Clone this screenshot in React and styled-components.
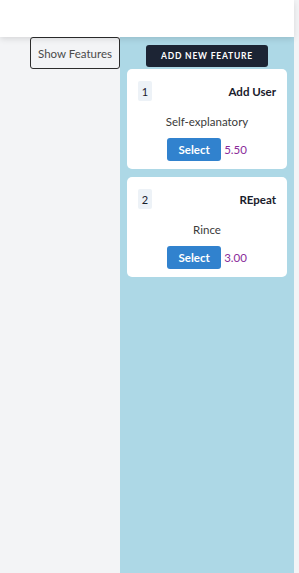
import React from "react";
import styled, { createGlobalStyle } from "styled-components";

const GlobalStyle = createGlobalStyle`
  html, body {
    margin: 0;
    padding: 0;
    background: #f3f4f6;
    font-family: "Lato", "Liberation Sans", sans-serif;
  }
`;

const features = [
  { id: 1, name: "Add User", description: "Self-explanatory", price: "5.50" },
  { id: 2, name: "REpeat", description: "Rince", price: "3.00" },
];

const Page = styled.div`
  width: 294px;
  min-height: 573px;
  display: flex;
  flex-direction: column;
  background: #f3f4f6;
`;

const Header = styled.header`
  height: 37px;
  background: #ffffff;
  box-shadow: 0 2px 6px rgba(0, 0, 0, 0.12);
  position: relative;
  z-index: 1;
`;

const Body = styled.div`
  flex: 1;
  display: flex;
`;

const LeftSide = styled.div`
  width: 120px;
  display: flex;
  justify-content: flex-end;
  align-items: flex-start;
`;

const ShowButton = styled.button`
  height: 32px;
  padding: 0 7px;
  background: #f3f4f6;
  border: 1.5px solid #2d2d2d;
  border-radius: 3px;
  font-family: inherit;
  font-size: 11.5px;
  color: #4a4a4a;
`;

const Panel = styled.aside`
  flex: 1;
  background: #add8e6;
  padding: 8px 7px;
  display: flex;
  flex-direction: column;
  align-items: center;
  gap: 8px;
`;

const AddButton = styled.button`
  width: 122px;
  height: 22px;
  background: #1c2434;
  color: #ffffff;
  border: none;
  border-radius: 3px;
  font-family: inherit;
  font-weight: 700;
  font-size: 8.5px;
  letter-spacing: 0.8px;
  text-transform: uppercase;
`;

const CardList = styled.div`
  align-self: stretch;
  display: flex;
  flex-direction: column;
  gap: 8px;
  margin-top: -6px;
`;

const Card = styled.div`
  background: #ffffff;
  border-radius: 5px;
  padding: 12px 11px 8px;
  display: flex;
  flex-direction: column;
  align-items: center;
`;

const CardHead = styled.div`
  align-self: stretch;
  display: flex;
  justify-content: space-between;
  align-items: center;
`;

const Badge = styled.span`
  width: 14px;
  height: 20px;
  display: flex;
  align-items: center;
  justify-content: center;
  background: #edf2f7;
  border-radius: 2px;
  font-size: 11px;
  font-weight: 400;
  color: #1a202c;
`;

const Name = styled.span`
  font-size: 11.5px;
  font-weight: 700;
  color: #1a202c;
`;

const Description = styled.p`
  margin: 14px 0 10px;
  font-size: 11.5px;
  color: #3a3a3a;
`;

const SelectRow = styled.div`
  display: flex;
  align-items: center;
  gap: 3px;
`;

const SelectButton = styled.button`
  width: 54px;
  height: 23px;
  background: #3182ce;
  color: #ffffff;
  border: none;
  border-radius: 3px;
  font-family: inherit;
  font-weight: 700;
  font-size: 11.5px;
`;

const Price = styled.span`
  font-size: 11.5px;
  color: #8a2a9a;
`;

export default function App() {
  return (
    <>
      <GlobalStyle />
      <Page>
        <Header />
        <Body>
          <LeftSide>
            <ShowButton>Show Features</ShowButton>
          </LeftSide>
          <Panel>
            <AddButton>Add New Feature</AddButton>
            <CardList>
              {features.map((f) => (
                <Card key={f.id}>
                  <CardHead>
                    <Badge>{f.id}</Badge>
                    <Name>{f.name}</Name>
                  </CardHead>
                  <Description>{f.description}</Description>
                  <SelectRow>
                    <SelectButton>Select</SelectButton>
                    <Price>{f.price}</Price>
                  </SelectRow>
                </Card>
              ))}
            </CardList>
          </Panel>
        </Body>
      </Page>
    </>
  );
}
